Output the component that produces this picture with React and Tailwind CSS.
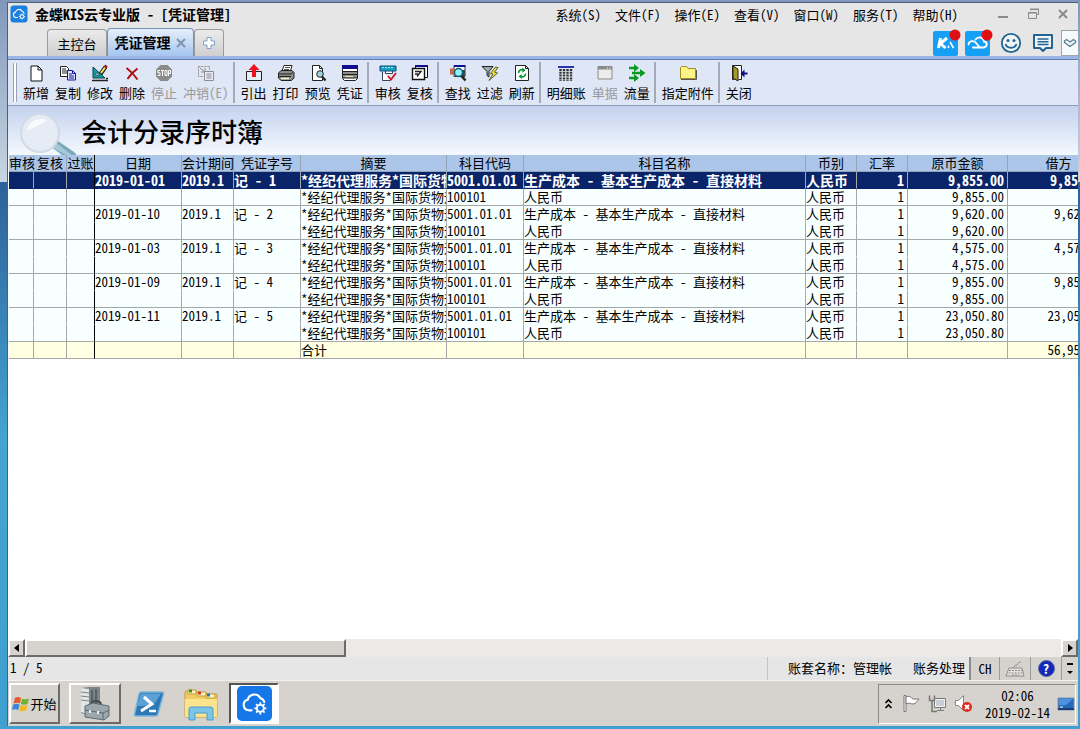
import { useState } from "react";
import { clsx } from "clsx";

const MENUS = ["系统(S)", "文件(F)", "操作(E)", "查看(V)", "窗口(W)", "服务(T)", "帮助(H)"];

const COLUMNS = [
	{ label: "审核", width: "w-[25px]" },
	{ label: "复核", width: "w-[33px]" },
	{ label: "过账", width: "w-[28px]", frozen: true },
	{ label: "日期", width: "w-[87px]" },
	{ label: "会计期间", width: "w-[52px]" },
	{ label: "凭证字号", width: "w-[67px]" },
	{ label: "摘要", width: "w-[146px]", clip: true },
	{ label: "科目代码", width: "w-[77px]" },
	{ label: "科目名称", width: "w-[282px]" },
	{ label: "币别", width: "w-[51px]" },
	{ label: "汇率", width: "w-[51px]", right: true },
	{ label: "原币金额", width: "w-[100px]", right: true },
	{ label: "借方", width: "w-[102px]", right: true },
];

const SUMMARY = "*经纪代理服务*国际货物运";
const VOUCHERS = [
	{ no: 1, date: "2019-01-01", amount: "9,855.00" },
	{ no: 2, date: "2019-01-10", amount: "9,620.00" },
	{ no: 3, date: "2019-01-03", amount: "4,575.00" },
	{ no: 4, date: "2019-01-09", amount: "9,855.00" },
	{ no: 5, date: "2019-01-11", amount: "23,050.80" },
];

// every voucher has a debit line and a credit line
const ROWS = VOUCHERS.flatMap(({ no, date, amount }) => [
	{
		key: `${no}-debit`,
		cells: ["", "", "", date, "2019.1", `记 - ${no}`, SUMMARY, "5001.01.01", "生产成本 - 基本生产成本 - 直接材料", "人民币", "1", amount, amount],
	},
	{
		key: `${no}-credit`,
		last: true,
		cells: ["", "", "", "", "", "", SUMMARY, "100101", "人民币", "人民币", "1", amount, ""],
	},
]);

const TOTALS = ["", "", "", "", "", "", "合计", "", "", "", "", "", "56,955.80"];

const Icon = ({ size = "size-[18px]", box = "0 0 18 18", children }) => (
	<svg viewBox={box} className={clsx(size, "flex-none")} fill="none" aria-hidden="true">
		{children}
	</svg>
);

const ICONS = {
	add: (
		<>
			<path d="M4 2h7l4 4v11H4z" fill="#fff" stroke="#111" />
			<path d="M11 2v4h4" stroke="#111" />
		</>
	),
	copy: (
		<>
			<path d="M1.500 2.500h6l2 2v8h-8z" fill="#fff" stroke="#222" />
			<path d="M3 5h4M3 7h5M3 9h5" stroke="#222" />
			<path d="M8.500 6.500h5l3 3v6.500h-8z" fill="#dfe5ff" stroke="#1414a0" />
			<path d="M13.500 6.500v3h3M10 10h3M10 12h5M10 14h5" stroke="#1414a0" />
		</>
	),
	edit: (
		<>
			<path d="M2 3v11h12z" fill="#14a0a0" stroke="#0a3c46" />
			<path d="M5 8.500v3h3.500z" fill="#e0e8f8" stroke="#0a3c46" strokeWidth=".6" />
			<path d="M1 16.500h16M15 14.500h2" stroke="#222" strokeWidth="1.500" />
			<path d="M9.500 10l5-7" stroke="#222" strokeWidth="4" />
			<path d="M10 9l4-5.500" stroke="#f5e85a" strokeWidth="2" />
			<path d="M14 3.500l1.500-2" stroke="#a01414" strokeWidth="3" />
		</>
	),
	remove: <path d="M3.500 4c3.500 2.500 7.500 6.500 11 11.500M14.500 4.500C10.500 7.500 7 11 4.500 15" stroke="#b00c12" strokeWidth="2" />,
	stop: (
		<>
			<path d="M5.500 1h7L17 5.500v7L12.500 17h-7L1 12.500v-7z" fill="#8a8a8a" />
			<path d="M5 6.500H2.800v2.300H5V11.500H2.500M6 6.500h3M7.500 6.500v5.500M10 6.500h2v5h-2zM13.500 12V6.500h2v3h-2" stroke="#fff" />
		</>
	),
	reverse: (
		<>
			<path d="M1.500 2.500h11v4M1.500 2.500v10h4" stroke="#8c8c8c" strokeDasharray="2 1" />
			<path d="M3 4l5 4M8 4v4H4" stroke="#8c8c8c" />
			<path d="M7.500 7.500h9v9h-9z" fill="#e6ebf6" stroke="#8c8c8c" />
			<path d="M9.500 10h5M9.500 12h5M9.500 14h5" stroke="#8c8c8c" />
		</>
	),
	export: (
		<>
			<path d="M1.500 7.500h15v9h-15z" fill="#e8ecf4" stroke="#222" />
			<path d="M9 0l5.500 6H11v7H7V6H3.500z" fill="#f0101c" />
		</>
	),
	print: (
		<>
			<path d="M5 7l2-5.500h8L13.500 7z" fill="#fff" stroke="#222" />
			<path d="M8 3.500h5M7 5.500h5" stroke="#555" />
			<path d="M1.500 9L4 6.500h11l2 2V14l-2.500 2.500H4L1.500 14z" fill="#8c8c8c" stroke="#222" />
			<path d="M2 10h12l2.500-2M2 12.500h12" stroke="#222" />
			<path d="M4 14.500h8" stroke="#f4f4c0" strokeWidth="1.500" />
		</>
	),
	preview: (
		<>
			<path d="M3.500 1.500h7l3 3v12h-10z" fill="#fff" stroke="#222" />
			<path d="M10.500 1.500v3h3" stroke="#222" />
			<circle cx="11" cy="10" r="3.300" fill="#9fd3dc" stroke="#222" />
			<path d="M13 12.500l3.500 4" stroke="#222" strokeWidth="2.200" />
		</>
	),
	voucher: (
		<>
			<path d="M1.500 1.500h15v13l-2 2h-11l-2-2z" fill="#fff" stroke="#222" />
			<path d="M1 1h16v4H1z" fill="#10108c" />
			<path d="M2 7h14v7H2z" fill="#8c8c8c" />
			<path d="M2 7.500h14M2 10.500h14M2 14h14" stroke="#222" />
			<path d="M4 12.500h8" stroke="#f4e6a0" />
		</>
	),
	audit: (
		<>
			<path d="M1.500 6.500h5v3h7v-3M3.500 8v8.500h8" fill="#fff" stroke="#345" />
			<path d="M1 2h16v5H1z" fill="#17a2c4" stroke="#0c4a78" />
			<path d="M3 3.500h12" stroke="#a5edf5" strokeDasharray="2 1" />
			<path d="M9 12l3 3.500L17 9" stroke="#d21420" strokeWidth="1.800" />
		</>
	),
	review: (
		<>
			<path d="M4.500 1.500h12v12h-12z" fill="#fff" stroke="#111" />
			<path d="M4 2h13" stroke="#10108c" strokeWidth="2" />
			<path d="M1.500 4.500h12v11h-12z" fill="#fff" stroke="#111" strokeWidth="1.400" />
			<path d="M4 7.500h6l-4 5M4 10h3" stroke="#222" strokeWidth="1.400" />
		</>
	),
	find: (
		<>
			<path d="M5 1.500h11v11H5z" fill="#fff" stroke="#333" />
			<path d="M5 2h11.500" stroke="#10108c" strokeWidth="2" />
			<path d="M1 4.500h5v6H1z" fill="#c7684c" />
			<path d="M13 6h3v7h-3z" fill="#444" />
			<circle cx="9.500" cy="8.500" r="4" fill="#8ff2f6" stroke="#0b5a74" strokeWidth="1.400" />
			<path d="M12.500 12l4 4.500" stroke="#222" strokeWidth="2.600" />
		</>
	),
	filter: (
		<>
			<path d="M1 2.500h11L8 7.500V13L6 11.500v-4z" fill="#9aa" stroke="#222" />
			<path d="M14.500 3L9.500 9.500l2.500.5L8 16.500l8.500-7.500-3-.8L17 3.500z" fill="#f7e726" stroke="#333" strokeWidth=".8" />
		</>
	),
	refresh: (
		<>
			<path d="M2.500 1.500h10l3 3v12h-13z" fill="#fff" stroke="#222" />
			<path d="M12.500 1.500v3h3" stroke="#222" />
			<path d="M5.500 9c0-3 3-4 5-3M12.500 9.500c0 3-3 4-5 3" stroke="#0a9a32" strokeWidth="1.600" />
			<path d="M9 3.500l3.500 2.500L9.500 9zM9 15l-3.500-2.500L8.500 10z" fill="#0a9a32" />
		</>
	),
	ledger: (
		<>
			<path d="M1 3h16" stroke="#2a35b4" strokeWidth="2" />
			<path d="M3.500 5v12M7 5v12M10.500 5v12M14 5v12" stroke="#333" strokeWidth="2.400" strokeDasharray="2 .8" />
		</>
	),
	bill: (
		<>
			<path d="M2 2.500h14v12.500H2z" fill="#ececec" stroke="#8a8a8a" />
			<path d="M2 4h14" stroke="#8a8a8a" strokeWidth="3" />
			<path d="M11 4h1M13.500 4h1" stroke="#fff" />
		</>
	),
	flow: (
		<>
			<path d="M1 4h6M4 9h10M1 14h6" stroke="#0a9a22" strokeWidth="2.400" />
			<path d="M6 0L11 4l-5 4zM12 5L17.500 9l-5.500 4zM6 10L11 14l-5 4z" fill="#0a9a22" />
		</>
	),
	folder: (
		<>
			<path d="M1.500 14.500v-11l1-1h5l1.500 2h7.500v10z" fill="#fdf487" stroke="#a08b20" />
			<path d="M2 15.500h15.500V6" stroke="#555" />
		</>
	),
	close: (
		<>
			<path d="M2.500 1.500h9v14h-3M2.500 1.500v14h2" fill="#fff" stroke="#222" />
			<path d="M3 2l5 3v12l-5-3z" fill="#a39b22" stroke="#222" />
			<path d="M11 9.500h6.500" stroke="#101080" strokeWidth="2" />
			<path d="M14.500 5.500v8L10.500 9.500z" fill="#101080" />
		</>
	),
};

const TOOL_GROUPS = [
	[
		["add", "新增"],
		["copy", "复制"],
		["edit", "修改"],
		["remove", "删除"],
		["stop", "停止", true],
		["reverse", "冲销(E)", true],
	],
	[
		["export", "引出"],
		["print", "打印"],
		["preview", "预览"],
		["voucher", "凭证"],
	],
	[
		["audit", "审核"],
		["review", "复核"],
	],
	[
		["find", "查找"],
		["filter", "过滤"],
		["refresh", "刷新"],
	],
	[
		["ledger", "明细账"],
		["bill", "单据", true],
		["flow", "流量"],
	],
	[["folder", "指定附件"]],
	[["close", "关闭"]],
];

const CloudGear = () => (
	<>
		<path d="M15 25h-3a5.500 5.500 0 0 1-1-10.800A7 7 0 0 1 24 12.500c2 .5 3.500 2 4 4" stroke="#fff" strokeWidth="2.200" strokeLinecap="round" />
		<circle cx="24" cy="23" r="3.600" stroke="#fff" strokeWidth="2" />
		<path d="M24 16.800v2.400M24 26.800v2.400M17.800 23h2.400M27.800 23h2.400M19.600 18.600l1.700 1.700M26.700 25.700l1.700 1.700M28.400 18.600l-1.700 1.700M21.300 25.700l-1.700 1.700" stroke="#fff" strokeWidth="1.800" />
	</>
);

function TitleBar() {
	return (
		<header className="flex h-[22px] items-center">
			<Icon size="ml-[2px] size-[18px]" box="0 0 36 36">
				<rect x="1" y="1" width="34" height="34" rx="6" fill="#1b7fe0" />
				<CloudGear />
			</Icon>
			<h1 className="ml-[7px] text-[14px] font-bold whitespace-pre">金蝶KIS云专业版 - [凭证管理]</h1>
			<nav className="ml-auto flex gap-[14px]">
				{MENUS.map((menu) => (
					<button key={menu} type="button">
						{menu}
					</button>
				))}
			</nav>
			<div className="ml-[36px] flex gap-[12px] pr-[6px] text-[#8a8a8a]">
				<button type="button" aria-label="最小化">
					<Icon>
						<path d="M4 12h10" stroke="currentColor" strokeWidth="2" />
					</Icon>
				</button>
				<button type="button" aria-label="还原">
					<Icon>
						<path d="M6.500 5.500v-1h8v5h-2M4.500 7.500h8v6h-8zM6 4h9M4 8h9" stroke="currentColor" />
					</Icon>
				</button>
				<button type="button" aria-label="关闭窗口">
					<Icon>
						<path d="M5 5l8 8M13 5l-8 8" stroke="currentColor" strokeWidth="2" />
					</Icon>
				</button>
			</div>
		</header>
	);
}

function TabBar() {
	return (
		<div className="flex h-[31px] items-end">
			<div className="ml-[39px] flex items-end">
				<button type="button" className="h-[27px] w-[60px] rounded-t-sm border border-b-0 border-[#9a9a9a] bg-linear-to-b from-[#ebebeb] to-[#cfcfcf]">
					主控台
				</button>
				<div className="flex h-[28px] w-[87px] items-center justify-center gap-[4px] rounded-t-sm border border-b-0 border-[#7a8fb8] bg-linear-to-b from-[#e6effc] to-[#a5c5f0]">
					<button type="button" className="text-[14px] font-bold">
						凭证管理
					</button>
					<button type="button" aria-label="关闭标签">
						<Icon size="size-[12px]" box="0 0 12 12">
							<path d="M2 2l8 8M10 2l-8 8" stroke="#7d95ae" strokeWidth="2" />
						</Icon>
					</button>
				</div>
				<button type="button" aria-label="新建标签" className="flex h-[27px] w-[30px] items-center justify-center rounded-t-sm border border-b-0 border-[#9a9a9a] bg-linear-to-b from-[#ebebeb] to-[#cfcfcf]">
					<Icon size="size-[14px]" box="0 0 14 14">
						<path d="M5 1.500h4V5h3.500v4H9v3.500H5V9H1.500V5H5z" fill="#fff" stroke="#7fa0cc" />
					</Icon>
				</button>
			</div>
			<div className="ml-auto flex items-center gap-[7px]">
				<button type="button" aria-label="KA">
					<Icon size="h-[27px] w-[28px]" box="0 0 28 27">
						<rect y="2" width="25" height="25" rx="2" fill="#16a0f5" />
						<path d="M7.500 9L5.500 19M14 9l-6.500 5.500 5 4.500" stroke="#fff" strokeWidth="3" />
						<path d="M15.500 16.500V19M17 13l3.500 6" stroke="#fff" strokeWidth="1.500" />
						<circle cx="22" cy="6" r="5.500" fill="#e00f14" />
					</Icon>
				</button>
				<button type="button" aria-label="云服务" className="-ml-[3px]">
					<Icon size="h-[27px] w-[28px]" box="0 0 28 27">
						<rect y="2" width="25" height="25" rx="2" fill="#16a0f5" />
						<path d="M3.500 15.500c.5-4 6-4.500 8-1l3 3.500M8 18.500h10.500c4.500-.5 4-6 .5-6-.5-4.500-6-5.500-8.500-2" stroke="#fff" strokeWidth="1.800" strokeLinecap="round" />
						<circle cx="22" cy="6" r="5.500" fill="#e00f14" />
					</Icon>
				</button>
				<button type="button" aria-label="表情">
					<Icon size="size-[22px]" box="0 0 22 22">
						<circle cx="11" cy="11" r="9.200" fill="#eef4f8" stroke="#24648f" strokeWidth="1.800" />
						<path d="M5.500 12c1.500 5 9.500 5 11 0" stroke="#24648f" strokeWidth="1.800" />
						<circle cx="8" cy="8.500" r="1.500" fill="#24648f" />
						<circle cx="14" cy="8.500" r="1.500" fill="#24648f" />
					</Icon>
				</button>
				<button type="button" aria-label="消息" className="ml-[3px]">
					<Icon size="size-[22px]" box="0 0 22 22">
						<path d="M2 3h18v13h-6l-3 3-3-3H2z" fill="#eef4f8" stroke="#24648f" strokeWidth="2" strokeLinejoin="round" />
						<path d="M5.500 7h11M5.500 9.800h11M5.500 12.500h11" stroke="#24648f" strokeWidth="1.500" />
					</Icon>
				</button>
				<button type="button" aria-label="更多" className="flex h-[26px] w-[17px] items-center justify-center border border-r-0 border-[#9aa8b4] bg-[#f6fafb]">
					<Icon size="h-[10px] w-[14px]" box="0 0 14 10">
						<path d="M1.500 3l2-1.500L7 4l3.500-2.500 2 1.500v1.500L7 8.500 1.500 4.500z" stroke="#547e98" strokeWidth="1.400" />
					</Icon>
				</button>
			</div>
		</div>
	);
}

const ToolBar = () => (
	<div role="toolbar" className="flex h-[46px] items-center border-b border-[#8f9fb8] bg-[#dfe6f5]">
		<div className="ml-[5px] h-[39px] w-[4px] border-x border-[#9aa3b3] bg-white" />
		{TOOL_GROUPS.map((group, i) => (
			<div
				key={i}
				className={clsx("flex h-[41px] items-center gap-[6px] pr-[4px] pl-[6px]", i < TOOL_GROUPS.length - 1 && "border-r-2 border-[#a3abba]")}
			>
				{group.map(([icon, label, disabled]) => (
					<button
						key={icon}
						type="button"
						disabled={disabled}
						className={clsx("flex flex-col items-center gap-[2px] whitespace-nowrap", disabled && "text-[#9a9a9a]")}
					>
						<Icon>{ICONS[icon]}</Icon>
						{label}
					</button>
				))}
			</div>
		))}
	</div>
);

const Banner = () => (
	<div className="flex h-[49px] items-center bg-linear-to-b from-[#c3d2ee] to-[#f5f9fe]">
		<Icon size="ml-[8px] h-[49px] w-[60px]" box="0 0 60 49">
			<path d="M34 40l8-5 16 11 3 3H46z" fill="#78a8bb" />
			<path d="M34 40l5-4 17 13h-6z" fill="#a5c9d6" />
			<circle cx="24" cy="27" r="19" fill="#e6ecf6" stroke="#d2dae6" strokeWidth="2" />
			<path d="M11 24c2-8 10-13 20-10-6 4-12 8-20 10z" fill="#f8fafd" />
		</Icon>
		<h2 className="ml-[5px] text-[26px] leading-[32px] font-medium">会计分录序时簿</h2>
	</div>
);

const cellClass = ({ right, frozen, clip }) =>
	clsx(
		"border-r border-b p-0 align-top",
		clip && "overflow-x-clip",
		right && "pr-[3px] text-right",
		frozen ? "border-r-black" : "border-r-[#a5a8a8]",
	);

function VoucherTable() {
	const [selected, setSelected] = useState("1-debit");

	return (
		<div className="min-h-0 flex-1 overflow-x-clip bg-white">
			<table className="ml-px w-[1101px] table-fixed border-separate border-spacing-0 leading-[16px] whitespace-nowrap">
				<thead>
					<tr className="h-[17px] bg-[#abc6e8]">
						{COLUMNS.map(({ label, width, frozen }) => (
							<th
								key={label}
								scope="col"
								className={clsx(width, "border-r border-b border-b-[#93a3b8] p-0 text-center font-normal", frozen ? "border-r-black" : "border-r-[#93a3b8]")}
							>
								{label}
							</th>
						))}
					</tr>
				</thead>
				<tbody>
					{ROWS.map(({ key, last, cells }) => (
						<tr
							key={key}
							onClick={() => setSelected(key)}
							className={clsx("h-[17px]", key === selected ? "bg-[#0a246a] text-[14px] font-bold text-white" : "bg-[#f8ffff]")}
						>
							{cells.map((cell, i) => (
								<td key={i} className={clsx(cellClass(COLUMNS[i]), last ? "border-b-[#a5a8a8]" : "border-b-transparent")}>
									{cell}
								</td>
							))}
						</tr>
					))}
				</tbody>
				<tfoot>
					<tr className="h-[17px] bg-[#ffffe1]">
						{TOTALS.map((cell, i) => (
							<td key={i} className={clsx(cellClass(COLUMNS[i]), "border-b-[#a5a8a8]")}>
								{cell}
							</td>
						))}
					</tr>
				</tfoot>
			</table>
		</div>
	);
}

const RAISED = "border-2 border-t-white border-l-white border-r-[#6b6b6b] border-b-[#6b6b6b] bg-[#d6d3ce]";

const ScrollBar = () => (
	<div className="flex h-[18px] bg-[#ebeae6]">
		<button type="button" aria-label="向左滚动" className={clsx(RAISED, "flex w-[17px] items-center justify-center")}>
			<Icon size="size-[8px]" box="0 0 8 8">
				<path d="M6 0v8L1 4z" fill="#000" />
			</Icon>
		</button>
		<div className={clsx(RAISED, "w-[30%]")} />
		<button type="button" aria-label="向右滚动" className={clsx(RAISED, "ml-auto flex w-[17px] items-center justify-center")}>
			<Icon size="size-[8px]" box="0 0 8 8">
				<path d="M2 0v8l5-4z" fill="#000" />
			</Icon>
		</button>
	</div>
);

const StatusBar = () => (
	<div className="flex h-[23px] items-stretch bg-[#e6e6e6] leading-[21px]">
		<span className="pl-[2px]">1 / 5</span>
		<span className="ml-auto border-l border-[#c4c4c4] pr-[21px] pl-[20px]">账套名称：管理帐</span>
		<span className="pr-[4px]">账务处理</span>
		<div className="flex border-l-2 border-[#8c8c8c] bg-[#d6d3ce]">
			<button type="button" className="w-[29px] border-r border-[#9a9a9a]">
				CH
			</button>
			<button type="button" aria-label="软键盘" className="flex w-[31px] items-center justify-center border-r border-[#9a9a9a]">
				<Icon size="h-[18px] w-[20px]" box="0 0 20 18">
					<path d="M4 8h13l2 8H1z" fill="#e4e2de" stroke="#8c8c8c" />
					<path d="M4 10.500h13M3.500 13h14M7 15h7" stroke="#8c8c8c" strokeDasharray="2 1" />
					<path d="M9 8c0-4 3-2 4-4 0-1 1-2 3-2" stroke="#8c8c8c" />
				</Icon>
			</button>
			<button type="button" aria-label="帮助" className="flex w-[31px] items-center justify-center border-r border-[#9a9a9a]">
				<span className="size-[17px] rounded-full border border-[#5a6a9c] bg-[#1528b8] text-[13px] leading-[15px] font-bold text-white">?</span>
			</button>
			<button type="button" aria-label="选项" className="flex w-[16px] items-center justify-center">
				<Icon size="h-[14px] w-[8px]" box="0 0 8 14">
					<path d="M1 2h6" stroke="#000" strokeWidth="2" />
					<path d="M1 9h6l-3 3z" fill="#000" />
				</Icon>
			</button>
		</div>
	</div>
);

function TaskBar() {
	return (
		<footer className="flex h-[46px] items-center border-t border-[#f2f1ee] bg-[#d6d3ce] pr-[2px] pl-px">
			<button type="button" className={clsx(RAISED, "flex h-[41px] w-[51px] items-center justify-center")}>
				<Icon>
					<path d="M3 3c2-1.500 4-1 6 0L7.800 8.500C6 7.500 4 7.500 1.500 8.500z" fill="#e8582a" />
					<path d="M10 3.500c2 1 4 1.300 7 0L15.500 9c-2.500 1-4.500 1-6.700 0z" fill="#6fb22c" />
					<path d="M1.200 9.500c2.500-1 4.500-.8 6.400 0L6.200 15c-2-1-4-1-6.200 0z" fill="#3a86d8" />
					<path d="M8.600 10c2 1 4 1.200 6.700.2L14 15.500c-2.500 1-4.500 1-6.600 0z" fill="#f3b81c" />
				</Icon>
				开始
			</button>
			<button type="button" aria-label="服务器管理器" className={clsx(RAISED, "ml-[9px] flex h-[41px] w-[52px] items-center justify-center")}>
				<Icon size="h-[36px] w-[32px]" box="0 0 32 36">
					<path d="M2 2l8-1h11v26l-10 3-9-3z" fill="#7c8489" />
					<path d="M2 2l8 1v26l-8-3z" fill="#e1e6e8" />
					<path d="M2 6l8 1M2 10l8 1M2 14l8 1" stroke="#7c8489" />
					<path d="M13 4v21M17 3v21" stroke="#596167" strokeWidth="2" />
					<path d="M12 18c1-4 9-4 10 0" stroke="#444c50" strokeWidth="2" />
					<path d="M6 20l8-3 16 3v10l-5 4-19-3z" fill="#9ba8ad" stroke="#5e696e" />
					<path d="M6 24l18 3 6-3M24 27v7" stroke="#5e696e" />
					<path d="M11 24v3M19 25v3" stroke="#eee" strokeWidth="2" />
				</Icon>
			</button>
			<button type="button" aria-label="PowerShell" className="ml-[12px]">
				<Icon size="h-[26px] w-[32px]" box="0 0 32 26">
					<path d="M8 1h21q2 0 1.500 2L25 23q-.5 2-2.500 2H3q-2 0-1.500-2L6 3q.5-2 2-2z" fill="#2d78b4" stroke="#7fb6dc" strokeWidth="1.500" />
					<path d="M8 2.500h20L22 12c-6 3-12 3-18 3z" fill="#5ba1d4" />
					<path d="M11 6l8 7-11 7" stroke="#fff" strokeWidth="3" />
					<path d="M16 20h7" stroke="#fff" strokeWidth="2.500" />
				</Icon>
			</button>
			<button type="button" aria-label="资源管理器" className="ml-[18px]">
				<Icon size="h-[34px] w-[36px]" box="0 0 36 34">
					<path d="M3 4h10l2 3h18q1 0 1 1v22H2V5z" fill="#efcf62" stroke="#c79d32" />
					<path d="M5 3h8v4H5zM14 5h9v4h-9zM23 7h9v4h-9z" fill="#fdf3c4" stroke="#c79d32" />
					<path d="M6 4h3" stroke="#2a9c2a" strokeWidth="3" />
					<path d="M15 6h3" stroke="#d43c20" strokeWidth="3" />
					<path d="M24 8h3" stroke="#2a78c8" strokeWidth="3" />
					<path d="M2 12h32v18H2z" fill="#fae48e" />
					<path d="M6 33V22q0-2 2-2h20q2 0 2 2v11h-6v-7H12v7z" fill="#7cc4e8" stroke="#4c9cc8" />
				</Icon>
			</button>
			<button type="button" aria-label="金蝶KIS" className="ml-[10px] flex h-[41px] w-[50px] items-center justify-center border-2 border-t-[#555] border-r-white border-b-white border-l-[#555] bg-white">
				<Icon size="size-[35px]" box="0 0 36 36">
					<rect width="36" height="36" rx="5" fill="#1677e8" />
					<CloudGear />
				</Icon>
			</button>
			<div className="ml-auto flex h-[40px] items-center border border-t-[#8a8a8a] border-r-white border-b-white border-l-[#8a8a8a] pl-[5px]">
				<button type="button" aria-label="显示隐藏的图标">
					<Icon size="h-[12px] w-[9px]" box="0 0 9 12">
						<path d="M1.500 5l3-3 3 3M1.500 10l3-3 3 3" stroke="#000" strokeWidth="1.600" />
					</Icon>
				</button>
				<div className="ml-[9px] flex gap-[7px]">
					<Icon size="size-[19px]" box="0 0 19 19">
						<path d="M2 1.500h2v16H2z" fill="#fff" stroke="#777" />
						<path d="M4 3c3-1.500 5 0 6 1.500 2 1 4 .5 7 .5-2 2-3 5-6 5s-3-1.500-7-.5z" fill="#fff" stroke="#777" />
					</Icon>
					<Icon size="size-[19px]" box="0 0 19 19">
						<path d="M6.500 4.500h11v9h-11zM9 16.500h7M12.500 13.500v3" fill="#f4f4f4" stroke="#777" />
						<path d="M8 6h8v6H8z" fill="#c9ced2" />
						<path d="M1.500 1.500v5h5v-5M4 6.500v11h5" stroke="#777" strokeWidth="1.500" />
					</Icon>
					<Icon size="size-[19px]" box="0 0 19 19">
						<path d="M1.500 6.500h3l5-5v15l-5-5h-3z" fill="#fff" stroke="#888" />
						<circle cx="13" cy="13" r="5" fill="#dc2a20" />
						<path d="M11 11l4 4M15 11l-4 4" stroke="#fff" strokeWidth="1.800" />
					</Icon>
				</div>
				<time className="ml-[12px] text-center leading-[17px]" dateTime="2019-02-14T02:06">
					02:06
					<br />
					2019-02-14
				</time>
				<button type="button" aria-label="显示桌面" className="ml-[7px]">
					<Icon size="h-[14px] w-[18px]" box="0 0 18 14">
						<path d="M1 1h16v12H1z" fill="#2567b8" stroke="#7b99ba" />
						<path d="M2 2h14L9 8H2z" fill="#4d92dc" />
						<path d="M1 12h16" stroke="#1c3f70" strokeWidth="2" />
						<path d="M3 10h3" stroke="#fff" />
					</Icon>
				</button>
			</div>
		</footer>
	);
}

export default function App() {
	return (
		<div className="flex min-h-screen flex-col bg-[linear-gradient(to_bottom,#7f97ba,#c8d6e2_25%,#2c6099_25%,#45a4d0_60%,#3f9fd0)] pt-[2px] pr-[2px] pb-[3px] pl-[7px] font-['Noto_Sans_CJK_SC',sans-serif] text-[13px] leading-[17px] text-black [font-feature-settings:'hwid']">
			<div className="flex min-w-0 flex-1 flex-col border-t border-l border-[#4a6076] bg-[#e6e6e6]">
				<TitleBar />
				<TabBar />
				<div className="h-[4px] border-b border-[#5d7fb8] bg-[#9ab5e6]" />
				<ToolBar />
				<Banner />
				<VoucherTable />
				<ScrollBar />
				<StatusBar />
				<TaskBar />
			</div>
		</div>
	);
}
